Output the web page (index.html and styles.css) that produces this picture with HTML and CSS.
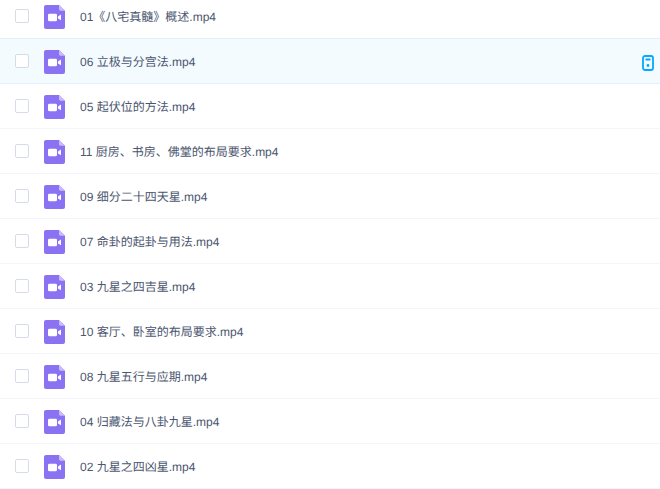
FILE: index.html
```html
<!DOCTYPE html>
<html lang="zh">
<head>
<meta charset="utf-8">
<title>文件列表</title>
<link rel="stylesheet" href="styles.css">
</head>
<body>
<svg class="defs" width="0" height="0" aria-hidden="true">
  <symbol id="video" viewBox="0 0 21 25" preserveAspectRatio="none">
    <path fill="#8b72f3" d="M2 0H15L21 6V23a2 2 0 0 1-2 2H2a2 2 0 0 1-2-2V2a2 2 0 0 1 2-2z"/>
    <path fill="#c9bcfa" d="M15 0L21 6H16.500a1.500 1.500 0 0 1-1.500-1.500z"/>
    <rect fill="#fff" x="4" y="9" width="9" height="8" rx="1.500"/>
    <path fill="#fff" d="M14 12L17 10V16L14 14z"/>
  </symbol>
</svg>
<ul class="list">
  <li class="row"><span class="check"></span><svg class="file"><use href="#video"/></svg><span class="name">01《八宅真髓》概述.mp4</span></li>
  <li class="row active"><span class="check"></span><svg class="file"><use href="#video"/></svg><span class="name">06 立极与分宫法.mp4</span>
    <svg class="phone" viewBox="0 0 12 16"><rect x="1" y="1" width="10" height="14" rx="2" fill="none" stroke="#06a7ff" stroke-width="1.800"/><rect x="3.500" y="3.500" width="5" height="2" fill="#06a7ff"/><circle cx="6" cy="10.500" r="1.400" fill="#06a7ff"/></svg></li>
  <li class="row"><span class="check"></span><svg class="file"><use href="#video"/></svg><span class="name">05 起伏位的方法.mp4</span></li>
  <li class="row"><span class="check"></span><svg class="file"><use href="#video"/></svg><span class="name">11 厨房、书房、佛堂的布局要求.mp4</span></li>
  <li class="row"><span class="check"></span><svg class="file"><use href="#video"/></svg><span class="name">09 细分二十四天星.mp4</span></li>
  <li class="row"><span class="check"></span><svg class="file"><use href="#video"/></svg><span class="name">07 命卦的起卦与用法.mp4</span></li>
  <li class="row"><span class="check"></span><svg class="file"><use href="#video"/></svg><span class="name">03 九星之四吉星.mp4</span></li>
  <li class="row"><span class="check"></span><svg class="file"><use href="#video"/></svg><span class="name">10 客厅、卧室的布局要求.mp4</span></li>
  <li class="row"><span class="check"></span><svg class="file"><use href="#video"/></svg><span class="name">08 九星五行与应期.mp4</span></li>
  <li class="row"><span class="check"></span><svg class="file"><use href="#video"/></svg><span class="name">04 归藏法与八卦九星.mp4</span></li>
  <li class="row"><span class="check"></span><svg class="file"><use href="#video"/></svg><span class="name">02 九星之四凶星.mp4</span></li>
</ul>
</body>
</html>
```
FILE: styles.css
```css
html, body {
  margin: 0;
  padding: 0;
  height: 489px;
  overflow: hidden;
  background: #fff;
}
.defs { display: block; height: 0; }
.list {
  list-style: none;
  margin: -6px 0 0;
  padding: 0;
  font-family: "Liberation Sans", "Noto Sans CJK SC", sans-serif;
  font-size: 12px;
  line-height: 20px;
  color: #4b566f;
  text-rendering: geometricPrecision;
}
.row {
  display: flex;
  align-items: center;
  height: 44px;
  padding: 0 6px 0 15px;
  border-bottom: 1px solid #f2f6fb;
}
.row.active {
  background: #f4fbff;
  border-bottom-color: #dff0fe;
  box-shadow: 0 -1px 0 #dff0fe;
}
.check {
  box-sizing: border-box;
  width: 14px;
  height: 14px;
  border: 1px solid #d5dbe8;
  border-radius: 2px;
  background: #fff;
  flex: none;
}
.file {
  width: 21px;
  height: 24px;
  margin: 2px 0 0 15px;
  flex: none;
}
.name {
  margin: 2px 0 0 15px;
  flex: 1;
  white-space: nowrap;
}
.phone {
  width: 12px;
  height: 16px;
  margin-top: 4px;
  flex: none;
}
```
